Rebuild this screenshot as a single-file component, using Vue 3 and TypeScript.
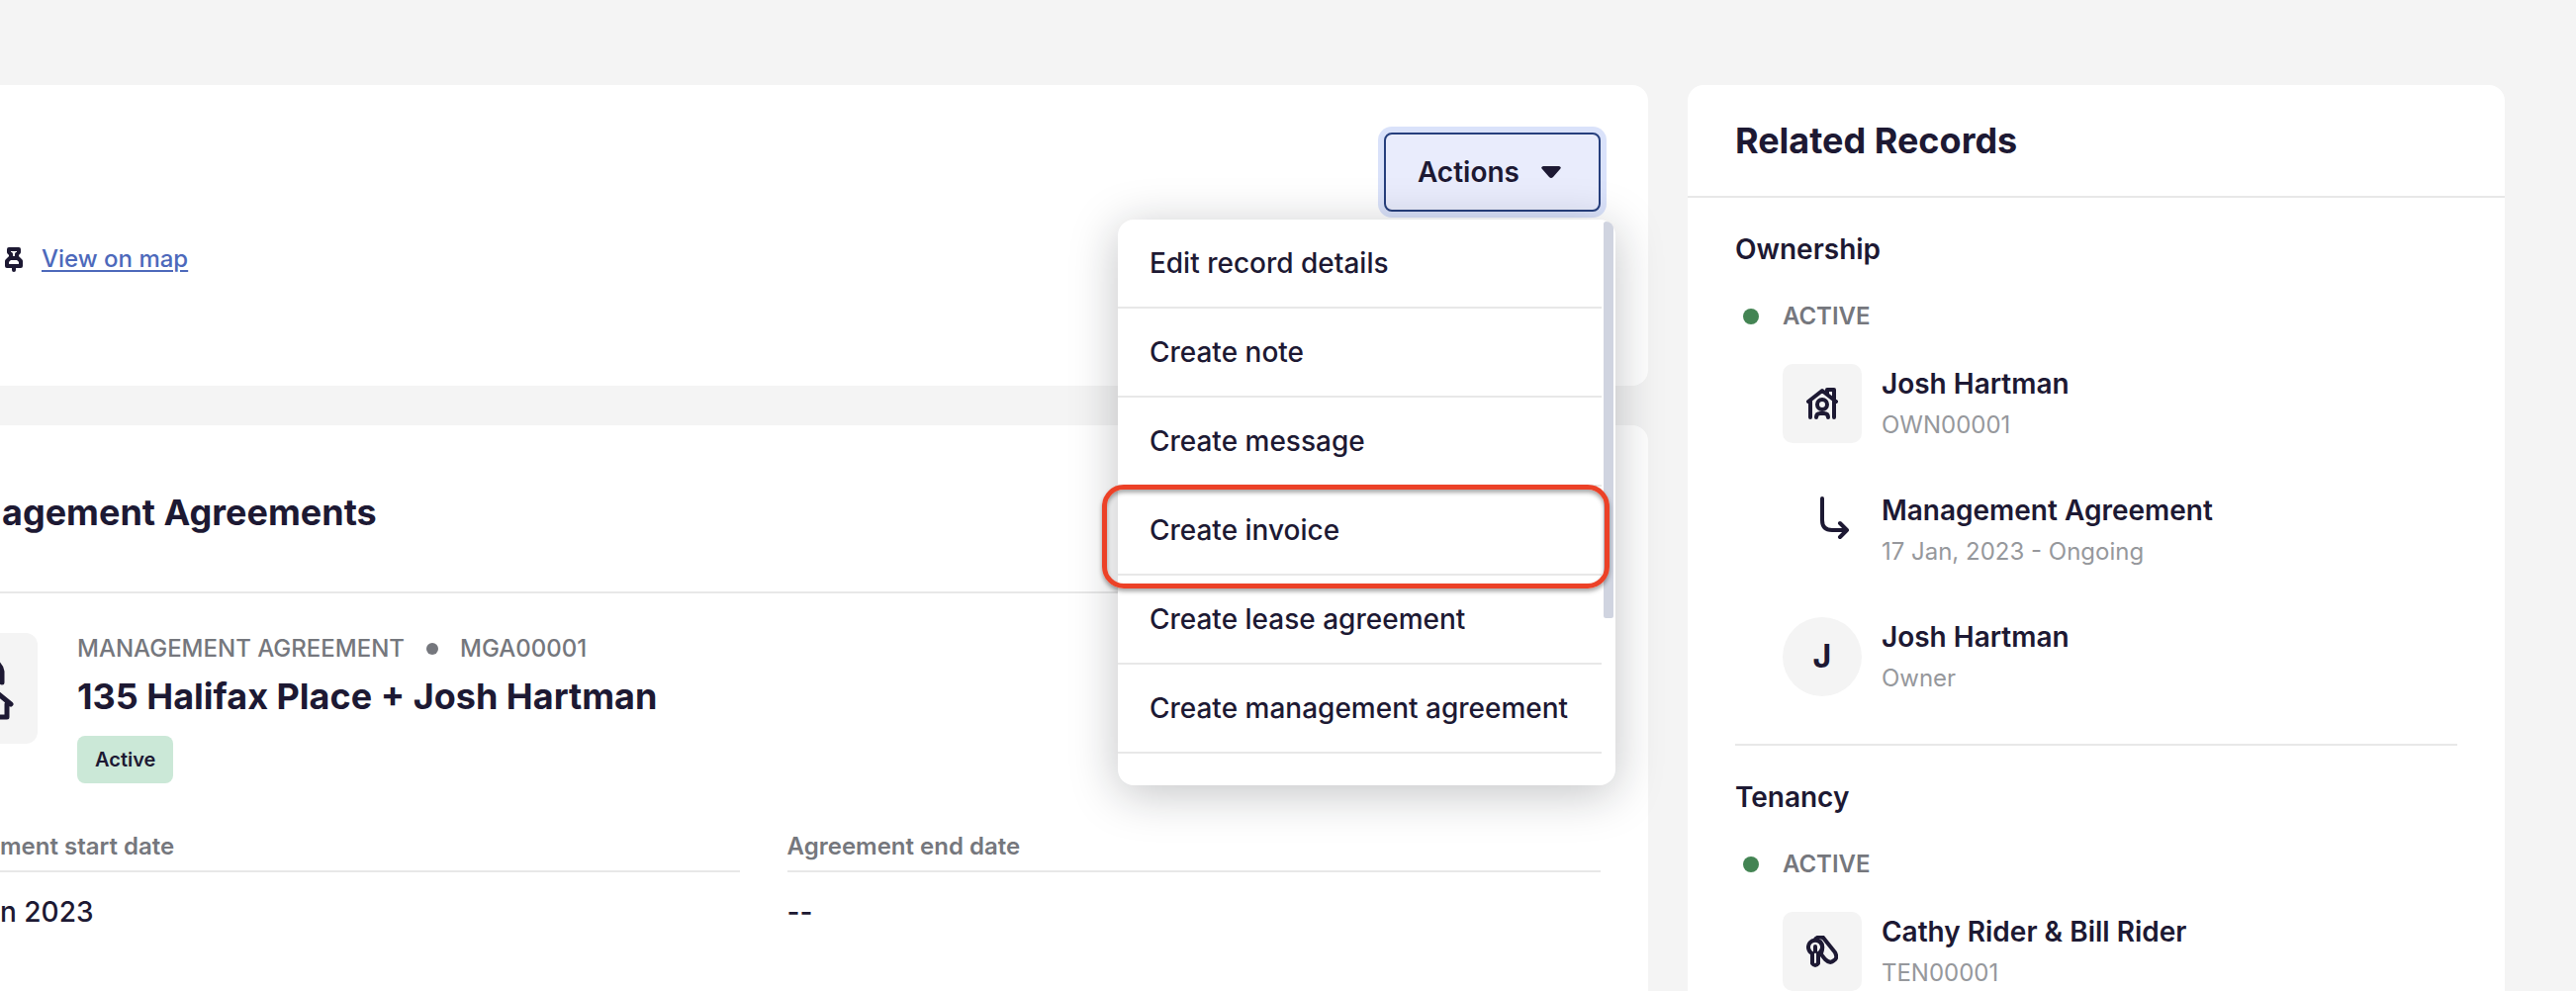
<script setup lang="ts">
import { ref } from 'vue'

interface MenuItem {
  label: string
  highlighted?: boolean
}

interface RelatedRecord {
  icon: 'house' | 'arrow' | 'initial' | 'keys'
  name: string
  detail: string
}

interface RecordGroup {
  title: string
  status: string
  records: RelatedRecord[]
}

const menuOpen = ref(true)

const menuItems: MenuItem[] = [
  { label: 'Edit record details' },
  { label: 'Create note' },
  { label: 'Create message' },
  { label: 'Create invoice', highlighted: true },
  { label: 'Create lease agreement' },
  { label: 'Create management agreement' },
]

const fields = [
  { label: 'ment start date', value: 'n 2023' },
  { label: 'Agreement end date', value: '--' },
]

const groups: RecordGroup[] = [
  {
    title: 'Ownership',
    status: 'ACTIVE',
    records: [
      { icon: 'house', name: 'Josh Hartman', detail: 'OWN00001' },
      { icon: 'arrow', name: 'Management Agreement', detail: '17 Jan, 2023 - Ongoing' },
      { icon: 'initial', name: 'Josh Hartman', detail: 'Owner' },
    ],
  },
  {
    title: 'Tenancy',
    status: 'ACTIVE',
    records: [{ icon: 'keys', name: 'Cathy Rider & Bill Rider', detail: 'TEN00001' }],
  },
]
</script>

<template>
  <div class="page">
    <main class="main">
      <section class="card summary">
        <div class="location">
          <svg class="pin" viewBox="0 0 24 28" aria-hidden="true">
            <path d="M7 4h10v3l-2 2v3l4 4v5H5v-5l4-4V9L7 7z M9 13h6 M12 21v4" />
          </svg>
          <a href="#map">View on map</a>
        </div>
        <div class="actions">
          <button class="actions-button" type="button" :aria-expanded="menuOpen" @click="menuOpen = !menuOpen">
            <span>Actions</span>
            <svg class="caret" viewBox="0 0 20 12" aria-hidden="true">
              <path d="M2 0h16q3 1 1 3l-7 8q-2 2-4 0L1 3Q-1 1 2 0z" />
            </svg>
          </button>
          <div v-if="menuOpen" class="menu">
            <ul>
              <li v-for="item in menuItems" :key="item.label" :class="{ highlighted: item.highlighted }">
                <button type="button">{{ item.label }}</button>
              </li>
            </ul>
            <div class="thumb"></div>
          </div>
        </div>
      </section>

      <section class="card agreements">
        <header class="agreements-head">
          <h2>agement Agreements</h2>
        </header>
        <div class="agreement">
          <div class="agreement-icon">
            <svg viewBox="0 0 64 64" aria-hidden="true">
              <path d="M8 26V15Q10 5 20 3h20q10 2 12 12v11" />
              <path d="M30 48l15-13 16 13 M37 48v13h20V48" />
            </svg>
          </div>
          <div>
            <p class="eyebrow"><span>MANAGEMENT AGREEMENT</span><i></i><span>MGA00001</span></p>
            <h3>135 Halifax Place + Josh Hartman</h3>
            <span class="badge">Active</span>
          </div>
        </div>
        <dl class="fields">
          <div v-for="field in fields" :key="field.label">
            <dt>{{ field.label }}</dt>
            <dd>{{ field.value }}</dd>
          </div>
        </dl>
      </section>
    </main>

    <aside class="card related">
      <h2>Related Records</h2>
      <section v-for="group in groups" :key="group.title" class="group">
        <h4>{{ group.title }}</h4>
        <p class="status"><i></i>{{ group.status }}</p>
        <ul class="records">
          <li v-for="record in group.records" :key="record.icon">
            <div class="tile" :class="record.icon">
              <svg v-if="record.icon === 'house'" viewBox="0 0 32 32" aria-hidden="true">
                <path d="M2 14L16 3l14 11 M4 13v17 M28 13v17 M21 6V2h7v10 M10 30q0-4 4-4h4q4 0 4 4" />
                <circle cx="16" cy="17" r="5" />
              </svg>
              <svg v-else-if="record.icon === 'arrow'" class="arrow-icon" viewBox="0 0 32 44" aria-hidden="true">
                <path d="M4 4v22q0 10 10 10h15 M22 29l7 7-7 7" />
              </svg>
              <svg v-else-if="record.icon === 'keys'" viewBox="0 0 32 32" aria-hidden="true">
                <path d="M6 18a7 7 0 1 1 6 0v10q-3 4-6 0z M9 11v5 M8 5q3-5 9-3l12 15q3 6-1 8-4 4-9-1l-4-5 M14 6q4 4 1 12" />
              </svg>
              <span v-else>J</span>
            </div>
            <div>
              <strong>{{ record.name }}</strong>
              <small>{{ record.detail }}</small>
            </div>
          </li>
        </ul>
      </section>
    </aside>
  </div>
</template>

<style>
body {
  background: #f4f4f4;
}
</style>

<style scoped>
* {
  box-sizing: border-box;
  margin: 0;
  padding: 0;
}

.page {
  display: grid;
  grid-template-columns: minmax(0, 121fr) minmax(0, 60fr);
  gap: 40px;
  height: 100vh;
  padding: 86px 72px 0 0;
  overflow: hidden;
  color: #1d1933;
  font-family: Inter, 'Liberation Sans', sans-serif;
  font-size: 28px;
  line-height: 40px;
}

ul {
  list-style: none;
}

svg {
  display: block;
  fill: none;
  stroke: currentColor;
  stroke-width: 4px;
  stroke-linecap: round;
  stroke-linejoin: round;
}

button {
  color: inherit;
  font: inherit;
  cursor: pointer;
}

h2,
h3 {
  font-size: 36px;
  font-weight: 700;
  line-height: 48px;
}

.main {
  display: flex;
  flex-direction: column;
  gap: 40px;
}

.card {
  background: #fff;
  border-radius: 16px;
}

.main .card {
  border-radius: 0 16px 16px 0;
}

.summary {
  display: flex;
  justify-content: space-between;
  align-items: flex-start;
  padding: 48px 48px 48px 0;
}

.location {
  display: flex;
  align-items: center;
  gap: 16px;
  padding: 112px 0 64px 2px;
  font-size: 24px;
  font-weight: 500;
  line-height: 32px;
}

.location a {
  color: #4d69bb;
  text-decoration-thickness: 2px;
  text-underline-offset: 3px;
}

.pin {
  width: 24px;
  height: 28px;
}

.actions {
  position: relative;
  z-index: 2;
}

.actions-button {
  display: flex;
  align-items: center;
  gap: 22px;
  width: 219px;
  height: 80px;
  padding-left: 32px;
  background: #e9ecfc;
  border: 2px solid #263f7d;
  border-radius: 8px;
  box-shadow: 0 0 0 6px #dae2fa;
  font-weight: 600;
}

.caret {
  width: 20px;
  height: 12px;
  fill: currentColor;
  stroke: none;
}

.menu {
  position: absolute;
  top: 88px;
  right: -15px;
  width: 503px;
  padding-bottom: 32px;
  background: #fff;
  border-radius: 16px;
  box-shadow: 0 8px 48px rgba(20, 24, 32, 0.26);
}

.menu ul {
  margin-right: 14px;
}

.menu li {
  position: relative;
  border-bottom: 2px solid #e8e8e8;
}

.menu li button {
  display: block;
  width: 100%;
  padding: 24px 32px;
  background: none;
  border: 0;
  font-weight: 500;
  text-align: left;
  white-space: nowrap;
}

.menu .highlighted::after {
  position: absolute;
  z-index: 1;
  inset: -2px -8px -15px -16px;
  border: 5px solid #ec4127;
  border-radius: 22px;
  box-shadow: 0 3px 4px rgba(0, 0, 0, 0.35), inset 0 3px 4px rgba(0, 0, 0, 0.35);
  content: '';
  pointer-events: none;
}

.thumb {
  position: absolute;
  top: 2px;
  right: 2px;
  width: 10px;
  height: 401px;
  background: #d0d4e0;
  border-radius: 4px 12px 4px 4px;
}

.agreements {
  flex: 1;
  padding-right: 48px;
}

.agreements-head {
  padding: 64px 2px 56px;
  border-bottom: 2px solid #e8e8e8;
}

.agreement {
  display: flex;
  gap: 40px;
  padding-top: 40px;
}

.agreement-icon {
  display: flex;
  align-items: center;
  justify-content: center;
  width: 112px;
  height: 112px;
  margin-left: -74px;
  background: #f4f4f4;
  border-radius: 12px;
}

.agreement-icon svg {
  width: 64px;
  height: 64px;
  stroke-width: 5px;
}

.eyebrow {
  display: flex;
  align-items: center;
  gap: 22px;
  color: #75777d;
  font-size: 24px;
  font-weight: 500;
  line-height: 32px;
}

.eyebrow i {
  width: 12px;
  height: 12px;
  background: #75777d;
  border-radius: 50%;
}

h3 {
  margin: 8px 0 16px;
}

.badge {
  display: block;
  width: max-content;
  padding: 8px 18px;
  background: #cbe8d7;
  border-radius: 8px;
  font-size: 20px;
  font-weight: 600;
  line-height: 32px;
}

.fields {
  display: grid;
  grid-template-columns: 10fr 11fr;
  gap: 48px;
  padding-top: 48px;
}

dt {
  padding-bottom: 8px;
  border-bottom: 2px solid #e8e8e8;
  color: #75777d;
  font-size: 24px;
  font-weight: 600;
  line-height: 32px;
}

dd {
  padding-top: 20px;
  font-weight: 500;
}

.related {
  align-self: start;
}

.related h2 {
  padding: 32px 48px;
  border-bottom: 2px solid #e8e8e8;
}

.group {
  margin: 0 48px;
  padding: 32px 0 48px;
}

.group + .group {
  border-top: 2px solid #e8e8e8;
}

h4 {
  font-size: 28px;
  font-weight: 600;
}

.status {
  display: flex;
  align-items: center;
  gap: 24px;
  margin: 32px 0;
  padding-left: 8px;
  color: #75777d;
  font-size: 24px;
  font-weight: 600;
  line-height: 32px;
}

.status i {
  width: 16px;
  height: 16px;
  background: #438453;
  border-radius: 50%;
}

.records {
  display: grid;
  gap: 48px;
  padding-left: 48px;
}

.records li {
  display: flex;
  gap: 20px;
}

.tile {
  display: flex;
  align-items: center;
  justify-content: center;
  width: 80px;
  height: 80px;
  background: #f4f4f4;
  border-radius: 10px;
  font-size: 32px;
  font-weight: 700;
}

.tile svg {
  width: 32px;
  height: 32px;
}

.tile.arrow {
  align-items: flex-start;
  justify-content: flex-end;
  padding: 4px 12px;
  background: none;
}

.tile .arrow-icon {
  width: 32px;
  height: 44px;
  overflow: visible;
}

.tile.initial {
  border-radius: 50%;
}

strong,
small {
  display: block;
}

strong {
  font-weight: 600;
}

small {
  padding-top: 6px;
  color: #96989c;
  font-size: 24px;
  line-height: 32px;
}
</style>
